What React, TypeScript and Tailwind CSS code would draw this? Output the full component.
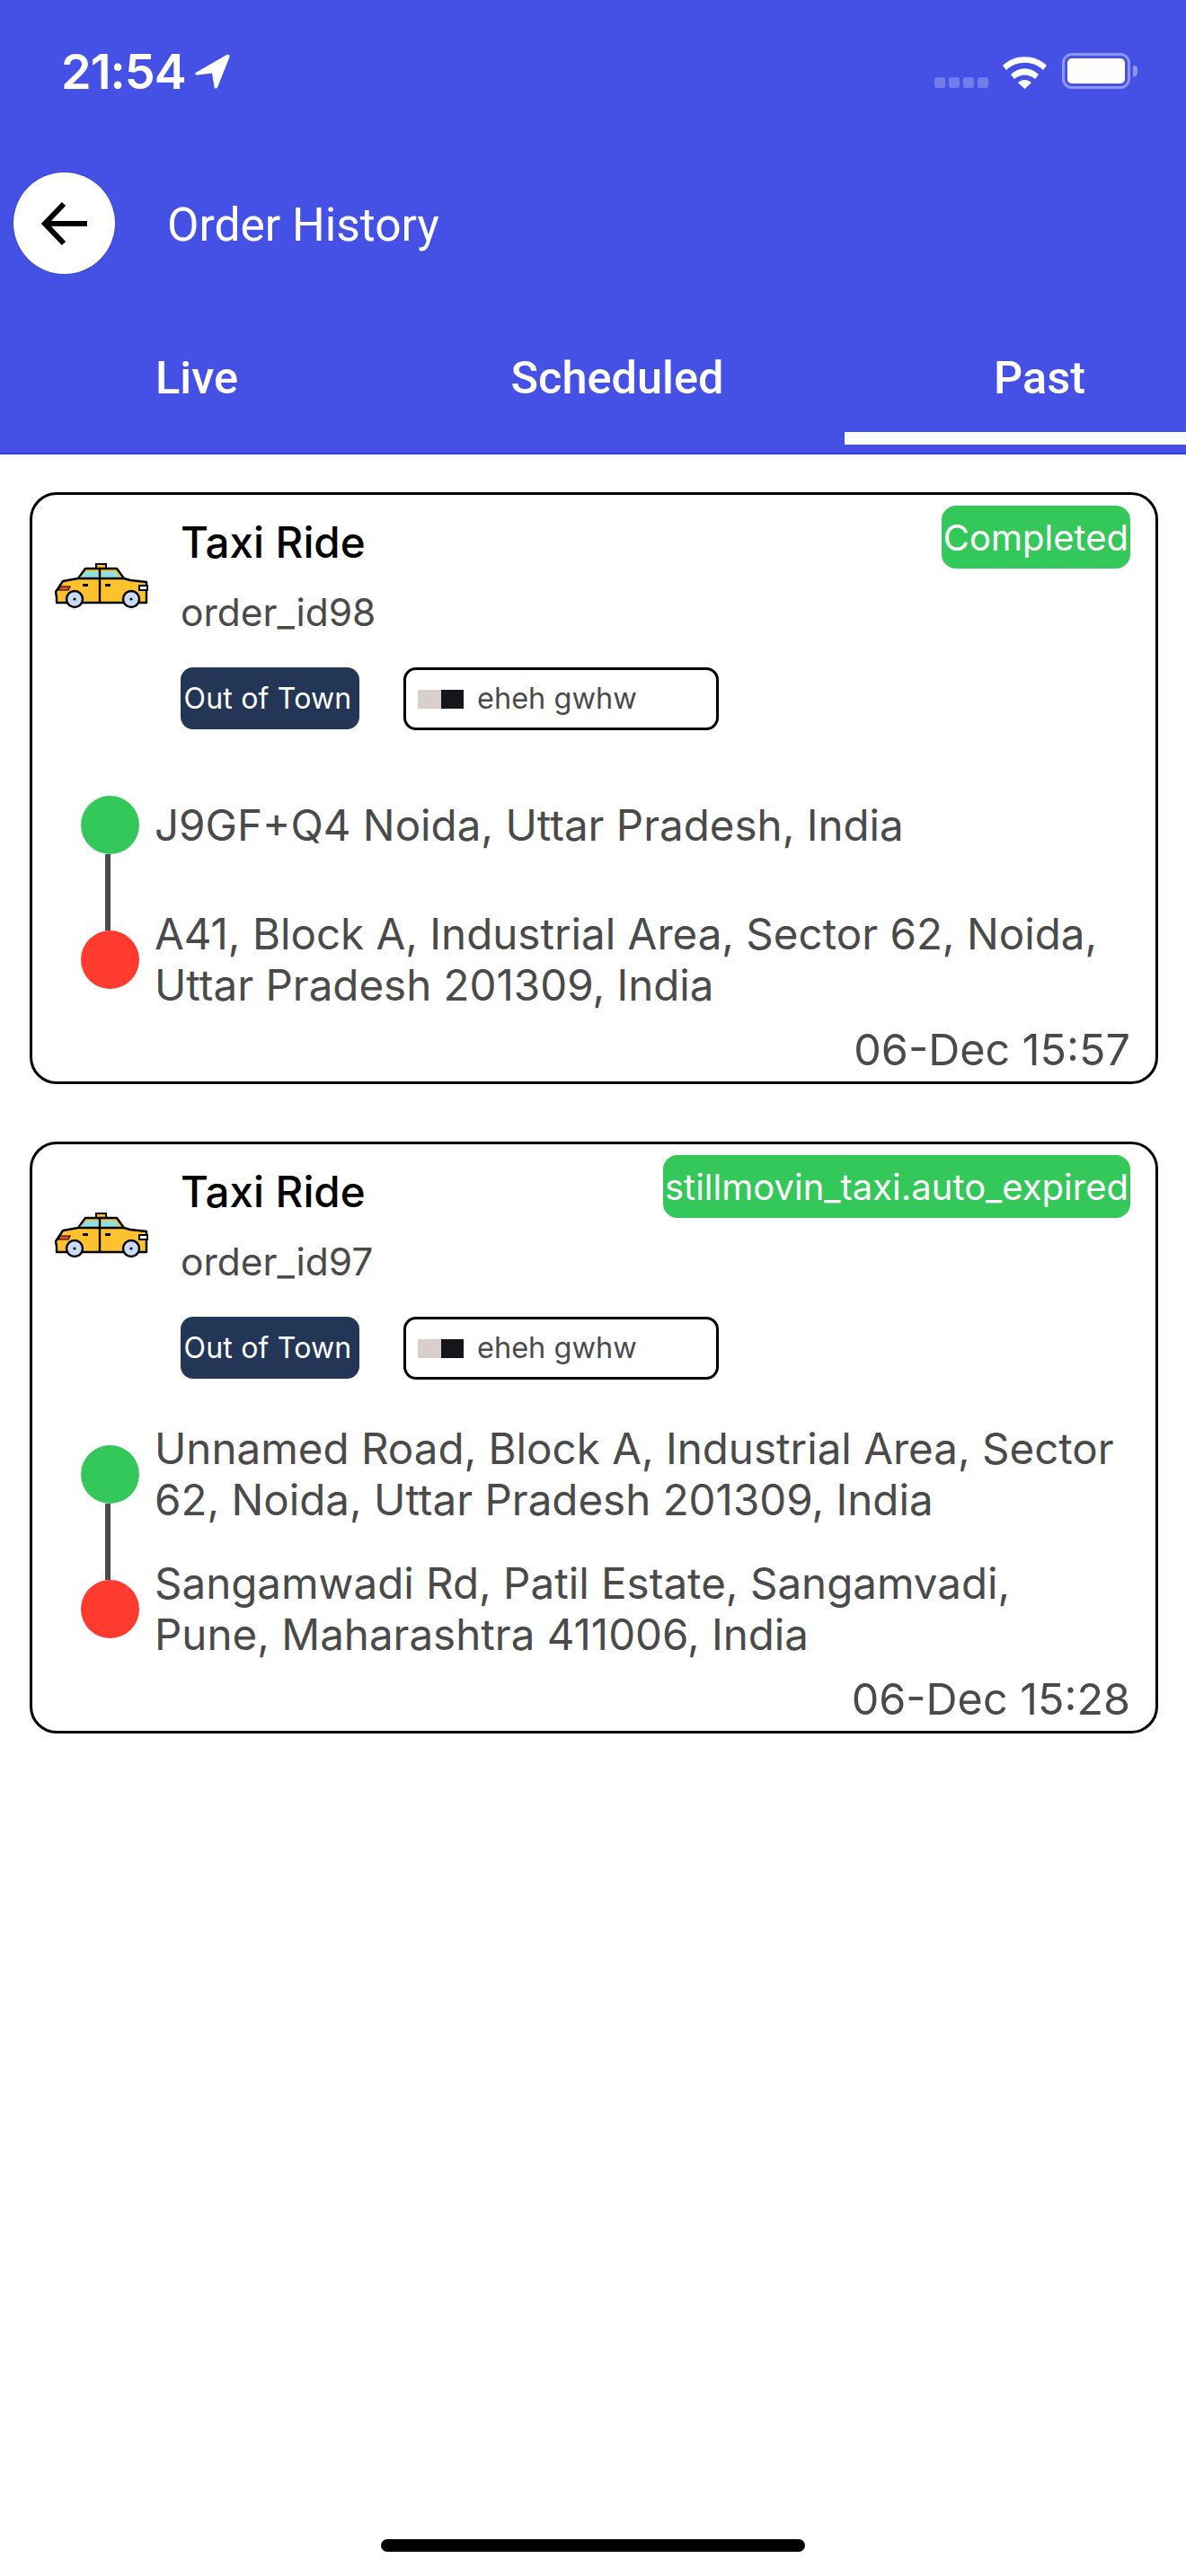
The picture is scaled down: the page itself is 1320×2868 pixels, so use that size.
type Order = {
  orderId: string;
  status: string;
  pickup: string[];
  drop: string[];
  date: string;
};

const orders: Order[] = [
  {
    orderId: "order_id98",
    status: "Completed",
    pickup: ["J9GF+Q4 Noida, Uttar Pradesh, India"],
    drop: ["A41, Block A, Industrial Area, Sector 62, Noida,", "Uttar Pradesh 201309, India"],
    date: "06-Dec 15:57",
  },
  {
    orderId: "order_id97",
    status: "stillmovin_taxi.auto_expired",
    pickup: ["Unnamed Road, Block A, Industrial Area, Sector", "62, Noida, Uttar Pradesh 201309, India"],
    drop: ["Sangamwadi Rd, Patil Estate, Sangamvadi,", "Pune, Maharashtra 411006, India"],
    date: "06-Dec 15:28",
  },
];

function TaxiIcon() {
  return (
    <svg width="105" height="52" viewBox="0 0 105 52" className="block">
      <path d="M46 7V2h11v5z" fill="#ffc12e" stroke="#000" strokeWidth="2" />
      <path
        d="M1 33 9 21l17-3 8-11h35l8 11 7 2 18 2v23H2v-6L1 33z"
        fill="#ffc12e"
        stroke="#000"
        strokeWidth="2.4"
        strokeLinejoin="round"
      />
      <path d="M27 18 35 10H49V18zM52 10H67L73 18H52z" fill="#8fdfe5" />
      <path d="M27 18H77M50 7V45" stroke="#000" strokeWidth="2.4" fill="none" />
      <path d="M31 24h6v3h-6zM56 24h6v3h-6z" fill="#000" />
      <path d="M6 27h11l-2 4H4z" fill="#e8503a" stroke="#000" strokeWidth="1.2" />
      <path d="M94 26h9v5h-9z" fill="#fff" stroke="#000" strokeWidth="2" />
      <circle cx="22" cy="41" r="9" fill="#c9dcf5" stroke="#000" strokeWidth="2.4" />
      <circle cx="85" cy="41" r="9" fill="#c9dcf5" stroke="#000" strokeWidth="2.4" />
      <circle cx="22" cy="41" r="1.6" fill="#000" />
      <circle cx="85" cy="41" r="1.6" fill="#000" />
    </svg>
  );
}

function StatusBar() {
  return (
    <div className="flex h-[192px] items-start justify-between pl-[68px] pr-[54px] pt-[59px]">
      <div className="flex items-center gap-[9px]">
        <span className="font-['Inter'] text-[54px] font-semibold leading-[40px] tracking-[-1px] text-white">21:54</span>
        <svg width="42" height="41" viewBox="0 0 40 40">
          <path d="M2 21 35 2c2-1 3.500 0 3 2.500L25 37c-1 2-3 2-3.500 0L19 22 3 24c-2.500 0-3-2-1-3z" fill="#fff" />
        </svg>
      </div>
      <div className="flex items-start">
        <div className="mr-[15px] mt-[27px] flex gap-[4px]">
          <span className="h-[12px] w-[12px] rounded-[3px] bg-white/25" />
          <span className="h-[12px] w-[12px] rounded-[3px] bg-white/25" />
          <span className="h-[12px] w-[12px] rounded-[3px] bg-white/25" />
          <span className="h-[12px] w-[12px] rounded-[3px] bg-white/25" />
        </div>
        <svg width="51" height="40" viewBox="0 0 51 40" className="mr-[16px]">
          <path d="M1 14C14 1 37 1 50 14l-4 5C35 8 16 8 5 19z" fill="#fff" />
          <path d="M10 24c9-9 22-9 31 0l-4 5c-7-6-16-6-23 0z" fill="#fff" />
          <path d="M18 33c4-4 11-4 15 0l-7.500 7z" fill="#fff" />
        </svg>
        <div className="flex items-center">
          <div className="flex h-[40px] w-[76px] rounded-[11px] border-[3px] border-white/40 p-[3px]">
            <div className="flex-1 rounded-[5px] bg-white" />
          </div>
          <div className="ml-[3px] h-[12px] w-[5px] rounded-r-[4px] bg-white/40" />
        </div>
      </div>
    </div>
  );
}

function Header() {
  return (
    <header className="h-[506px] border-b-[2px] border-[#2f3be0] bg-[#4551e5] font-['Roboto']">
      <StatusBar />
      <div className="flex items-center pl-[15px]">
        <div className="flex h-[113px] w-[113px] items-center justify-center rounded-full bg-white shadow-[0_0_2px_rgba(0,0,0,0.3)]">
          <svg width="54" height="50" viewBox="0 0 54 50" fill="none" stroke="#000" strokeWidth="6">
            <path d="M52 25H5M26 3 5 25l21 22" />
          </svg>
        </div>
        <span className="ml-[58px] mt-[4px] text-[51.500px] leading-[60px] text-white">Order History</span>
      </div>
      <div className="mt-[88px] flex h-[115px] text-[50.500px] font-medium leading-[56px] text-white">
        <div className="flex w-[438px] justify-center">Live</div>
        <div className="flex w-[498px] justify-center">Scheduled</div>
        <div className="flex flex-1 flex-col">
          <span className="ml-[170px]">Past</span>
          <div className="ml-[4px] mt-[32px] h-[14px] bg-white" />
        </div>
      </div>
    </header>
  );
}

function RouteRow({ lines }: { lines: string[] }) {
  return (
    <div className="flex h-[150px] flex-col justify-center text-[47.500px] leading-[57px] text-[#4a4a4a]">
      {lines.map((line) => (
        <div key={line} className="whitespace-nowrap">{line}</div>
      ))}
    </div>
  );
}

function OrderCard({ order }: { order: Order }) {
  return (
    <div className="h-[659px] rounded-[30px] border-[3px] border-black bg-white font-['Inter']">
      <div className="flex pr-[28px]">
        <div className="ml-[25px] mt-[75px] w-[105px] shrink-0">
          <TaxiIcon />
        </div>
        <div className="ml-[35px] flex-1 pt-[12px]">
          <div className="flex items-start justify-between">
            <span className="mt-[13px] text-[47.500px] font-medium leading-[56px] text-black">Taxi Ride</span>
            <span className="flex h-[70px] items-center rounded-[16px] bg-[#34c759] px-[2px] pt-[2px] text-[40px] text-white">
              {order.status}
            </span>
          </div>
          <div className="mt-[24px] text-[42.500px] leading-[50px] text-[#4a4a4a]">{order.orderId}</div>
          <div className="mt-[36px] flex gap-[49px]">
            <span className="flex h-[69px] w-[199px] items-center justify-center whitespace-nowrap rounded-[14px] bg-[#243656] pr-[5px] text-[32px] tracking-[0.2px] text-white">
              Out of Town
            </span>
            <div className="flex h-[70px] w-[351px] items-center rounded-[14px] border-[3px] border-black pl-[13px]">
              <div className="flex h-[21px] w-[51px]">
                <div className="flex-1 bg-[#d8cfcd]" />
                <div className="flex-1 bg-[#16151c]" />
              </div>
              <span className="ml-[15px] text-[32.500px] text-[#4a4a4a]">eheh gwhw</span>
            </div>
          </div>
        </div>
      </div>
      <div className="mt-[30px] flex items-center pl-[54px]">
        <div className="flex w-[65px] shrink-0 flex-col items-center">
          <div className="h-[65px] w-[65px] rounded-full bg-[#34c759]" />
          <div className="mr-[6px] h-[85px] w-[6px] bg-[#4a4a4a]" />
          <div className="h-[65px] w-[65px] rounded-full bg-[#ff3b30]" />
        </div>
        <div className="ml-[17px]">
          <RouteRow lines={order.pickup} />
          <RouteRow lines={order.drop} />
        </div>
      </div>
      <div className="mt-[1px] pr-[28px] text-right text-[48.500px] leading-[50px] text-[#4a4a4a]">{order.date}</div>
    </div>
  );
}

export default function App() {
  return (
    <div className="relative h-[2868px] w-[1320px] overflow-hidden bg-white">
      <Header />
      <main className="flex flex-col gap-[64px] pl-[33px] pr-[31px] pt-[42px]">
        {orders.map((order) => (
          <OrderCard key={order.orderId} order={order} />
        ))}
      </main>
      <div className="absolute bottom-[27px] left-[424px] h-[14px] w-[472px] rounded-full bg-black" />
    </div>
  );
}
